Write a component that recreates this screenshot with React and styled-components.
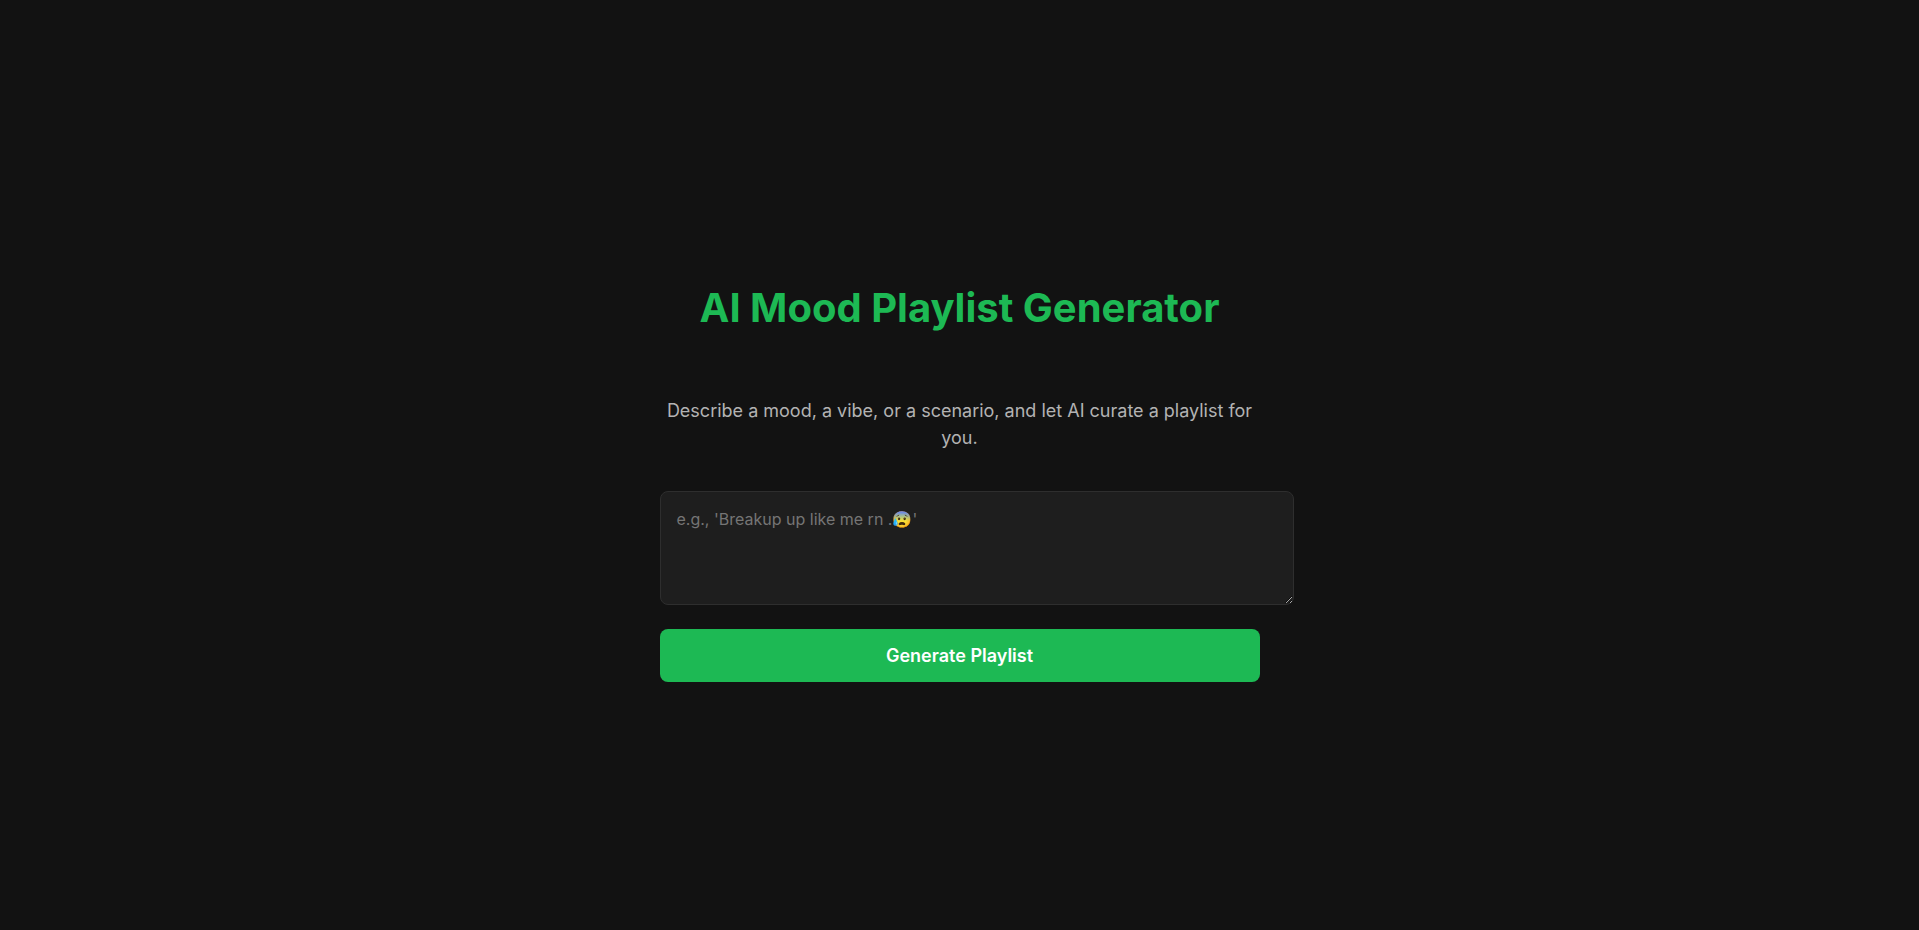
import React from "react";
import styled, { createGlobalStyle } from "styled-components";

const GlobalStyle = createGlobalStyle`
  body {
    margin: 0;
    background: #121212;
    color: #ffffff;
    font-family: Inter, "Liberation Sans", sans-serif;
    line-height: 1.5;
  }
`;

const Page = styled.main`
  display: flex;
  flex-direction: column;
  align-items: center;
  justify-content: center;
  min-height: 100vh;
`;

const Panel = styled.form`
  display: flex;
  flex-direction: column;
  width: 100%;
  max-width: 600px;
  text-align: center;
`;

const Title = styled.h1`
  margin: 30px 0 60px;
  color: #1db954;
  font-size: 40px;
  font-weight: 700;
  line-height: 58px;
`;

const Subtitle = styled.label`
  margin-bottom: 40px;
  color: #b3b3b3;
  font-size: 18px;
  line-height: 27px;
`;

const MoodInput = styled.textarea`
  box-sizing: content-box;
  width: 100%;
  height: 80px;
  margin-bottom: 24px;
  padding: 16px;
  border: 1px solid #2e2e2e;
  border-radius: 8px;
  background: #1e1e1e;
  color: #ffffff;
  font: 16px/22px Inter, "Liberation Sans", sans-serif;
  resize: vertical;
`;

const GenerateButton = styled.button`
  padding: 16px;
  border: none;
  border-radius: 8px;
  background: #1db954;
  color: #ffffff;
  font: 600 18px/21px Inter, "Liberation Sans", sans-serif;
  cursor: pointer;
`;

export default function App() {
  return (
    <>
      <GlobalStyle />
      <Page>
        <Panel onSubmit={(event) => event.preventDefault()}>
          <Title>AI Mood Playlist Generator</Title>
          <Subtitle htmlFor="mood">
            Describe a mood, a vibe, or a scenario, and let AI curate a playlist for you.
          </Subtitle>
          <MoodInput id="mood" placeholder="e.g., 'Breakup up like me rn .😰'" />
          <GenerateButton type="submit">Generate Playlist</GenerateButton>
        </Panel>
      </Page>
    </>
  );
}
